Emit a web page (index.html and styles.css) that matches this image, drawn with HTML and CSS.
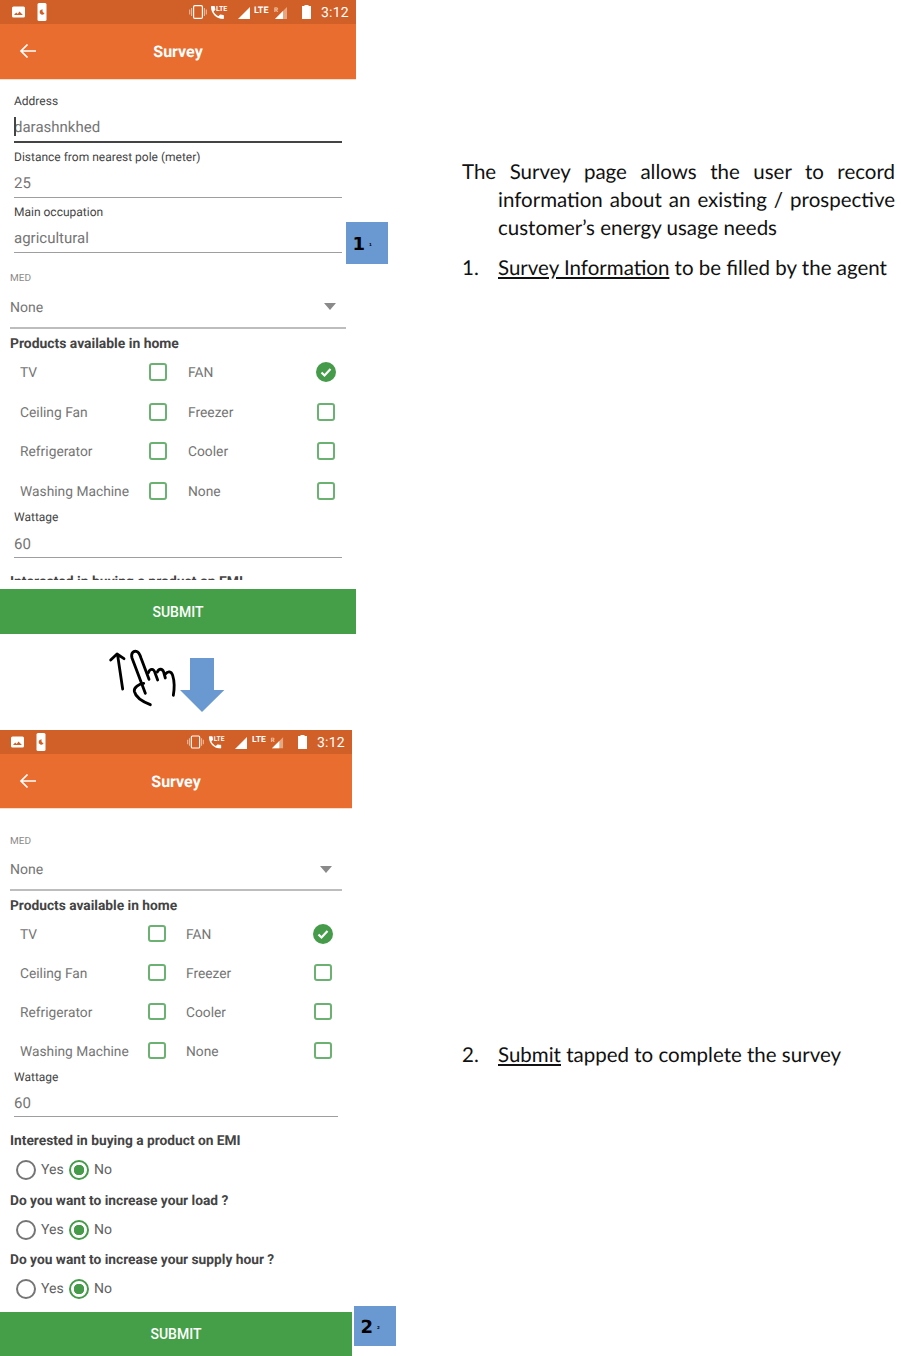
FILE: index.html
```html
<!DOCTYPE html>
<html lang="en">
<head>
  <meta charset="UTF-8" />
  <meta name="viewport" content="width=device-width, initial-scale=1.0" />
  <title>Survey page guide</title>
  <link rel="stylesheet" href="styles.css">
</head>
<body>
  <svg class="icon-defs" width="0" height="0">
    <symbol id="ic-image" viewBox="0 0 13 12">
      <rect x="0" y="0.500" width="13" height="11" rx="1.500" fill="#fff"/>
      <path d="M2 9l2.200-2.600 1.500 1.500 1.800-2.400 3.400 3.500z" fill="#d06027"/>
    </symbol>
    <symbol id="ic-phone" viewBox="0 0 10 18">
      <rect x="0.500" y="0" width="9" height="18" rx="1.500" fill="#fff"/>
      <path d="M5.800 6.500a2.600 2.600 0 1 0 1.800 3.600 2.400 2.400 0 0 1-1.800-3.600z" fill="#d06027"/>
    </symbol>
    <symbol id="ic-vibrate" viewBox="0 0 18 14">
      <rect x="4.600" y="0.600" width="8.800" height="12.800" rx="1.200" fill="none" stroke="#fff" stroke-width="1.200"/>
      <path d="M2.600 3v8M.7 4.500v5M15.400 3v8M17.300 4.500v5" stroke="#f0b999" stroke-width="1.100" fill="none"/>
    </symbol>
    <symbol id="ic-call" viewBox="0 0 19 14">
      <path transform="translate(-1.200 -1.200) scale(.72)" d="M6.620 10.790c1.440 2.830 3.760 5.140 6.590 6.590l2.200-2.200c.27-.27.670-.36 1.020-.24 1.120.37 2.330.57 3.570.57.550 0 1 .45 1 1V20c0 .55-.45 1-1 1-9.390 0-17-7.610-17-17 0-.55.45-1 1-1h3.500c.55 0 1 .45 1 1 0 1.250.2 2.450.57 3.570.11.350.03.740-.25 1.020l-2.200 2.200z" fill="#fff"/>
    </symbol>
    <symbol id="ic-signal" viewBox="0 0 12 12">
      <path d="M0 12L12 0v12z" fill="#fff"/>
    </symbol>
    <symbol id="ic-signal-faded" viewBox="0 0 34 14">
      <path d="M21 14L33 2v12z" fill="#e6a680"/>
      <path d="M21 14l8-8v8z" fill="#fff"/>
    </symbol>
    <symbol id="ic-battery" viewBox="0 0 9 14">
      <path d="M2.500 1V0h4v1H9v13H0V1z" fill="#fff"/>
    </symbol>
    <symbol id="ic-back" viewBox="0 0 18 16">
      <path d="M17 8H2M8.500 1.500L2 8l6.500 6.500" fill="none" stroke="#fff" stroke-width="1.700"/>
    </symbol>
    <symbol id="ic-checked" viewBox="0 0 20 20">
      <circle cx="10" cy="10" r="10" fill="#459b4a"/>
      <path d="M5.500 10.500l3 3 6-6.500" fill="none" stroke="#fff" stroke-width="2.200"/>
    </symbol>
  </svg>

  <div class="page">
    <div class="screens">

      <!-- top screen, form scrolled to the start -->
      <section class="phone phone-a">
        <div class="status-bar">
          <svg class="st-image"><use href="#ic-image"/></svg>
          <svg class="st-phone"><use href="#ic-phone"/></svg>
          <div class="status-right">
            <svg class="st-vibrate"><use href="#ic-vibrate"/></svg>
            <svg class="st-call" viewBox="0 0 19 14">
              <use href="#ic-call"/>
              <text x="6" y="6" class="svg-lte-small">LTE</text>
            </svg>
            <svg class="st-signal"><use href="#ic-signal"/></svg>
            <svg class="st-signal-r" viewBox="0 0 34 14">
              <text x="0" y="7.500" class="svg-lte">LTE</text>
              <text x="20" y="7" class="svg-r">R</text>
              <use href="#ic-signal-faded"/>
            </svg>
            <svg class="st-battery"><use href="#ic-battery"/></svg>
            <span class="st-time">3:12</span>
          </div>
        </div>
        <header class="app-bar">
          <svg class="back-icon"><use href="#ic-back"/></svg>
          <h1>Survey</h1>
        </header>
        <div class="form">
          <div class="field field-active">
            <label>Address</label>
            <div class="field-value"><i class="caret"></i>darashnkhed</div>
          </div>
          <div class="field">
            <label>Distance from nearest pole (meter)</label>
            <div class="field-value">25</div>
          </div>
          <div class="field">
            <label>Main occupation</label>
            <div class="field-value">agricultural</div>
          </div>
          <div class="select">
            <label>MED</label>
            <div class="select-row"><span>None</span><i class="select-arrow"></i></div>
          </div>
          <h2 class="form-heading">Products available in home</h2>
          <div class="products">
            <div class="product"><span>TV</span><i class="check"></i></div>
            <div class="product"><span>FAN</span><svg class="check-on"><use href="#ic-checked"/></svg></div>
            <div class="product"><span>Ceiling Fan</span><i class="check"></i></div>
            <div class="product"><span>Freezer</span><i class="check"></i></div>
            <div class="product"><span>Refrigerator</span><i class="check"></i></div>
            <div class="product"><span>Cooler</span><i class="check"></i></div>
            <div class="product"><span>Washing Machine</span><i class="check"></i></div>
            <div class="product"><span>None</span><i class="check"></i></div>
          </div>
          <div class="field field-wattage">
            <label>Wattage</label>
            <div class="field-value">60</div>
          </div>
          <h2 class="form-heading question">Interested in buying a product on EMI</h2>
        </div>
        <button class="submit">SUBMIT</button>
        <div class="step-badge"><b>1</b><small>1</small></div>
      </section>

      <div class="gesture">
        <svg width="180" height="96" viewBox="0 12 540 288">
          <g fill="none" stroke="#000" stroke-width="8.500" stroke-linecap="round" stroke-linejoin="round">
            <path d="M128 177L113 76M92 90l19-18 21 14"/>
            <path d="M211 224c-20-8-44-22-48-40-2-12 14-22 28-24"/>
            <path d="M196 190L156 84c-4-14 4-22 13-20 8 2 11 10 14 20l24 64"/>
            <path d="M205 128c6-14 16-12 20 0l8 22"/>
            <path d="M232 126c5-12 15-10 19 0l5 18"/>
            <path d="M256 132c8-10 18-8 22 4 5 16 6 36 2 60"/>
          </g>
          <path d="M330 84h72v96h31l-67 66-66-66h30z" fill="#6a98d0"/>
        </svg>
      </div>

      <!-- bottom screen, same form scrolled to the end -->
      <section class="phone phone-b">
        <div class="status-bar">
          <svg class="st-image"><use href="#ic-image"/></svg>
          <svg class="st-phone"><use href="#ic-phone"/></svg>
          <div class="status-right">
            <svg class="st-vibrate"><use href="#ic-vibrate"/></svg>
            <svg class="st-call" viewBox="0 0 19 14">
              <use href="#ic-call"/>
              <text x="6" y="6" class="svg-lte-small">LTE</text>
            </svg>
            <svg class="st-signal"><use href="#ic-signal"/></svg>
            <svg class="st-signal-r" viewBox="0 0 34 14">
              <text x="0" y="7.500" class="svg-lte">LTE</text>
              <text x="20" y="7" class="svg-r">R</text>
              <use href="#ic-signal-faded"/>
            </svg>
            <svg class="st-battery"><use href="#ic-battery"/></svg>
            <span class="st-time">3:12</span>
          </div>
        </div>
        <header class="app-bar">
          <svg class="back-icon"><use href="#ic-back"/></svg>
          <h1>Survey</h1>
        </header>
        <div class="form">
          <div class="select">
            <label>MED</label>
            <div class="select-row"><span>None</span><i class="select-arrow"></i></div>
          </div>
          <h2 class="form-heading">Products available in home</h2>
          <div class="products">
            <div class="product"><span>TV</span><i class="check"></i></div>
            <div class="product"><span>FAN</span><svg class="check-on"><use href="#ic-checked"/></svg></div>
            <div class="product"><span>Ceiling Fan</span><i class="check"></i></div>
            <div class="product"><span>Freezer</span><i class="check"></i></div>
            <div class="product"><span>Refrigerator</span><i class="check"></i></div>
            <div class="product"><span>Cooler</span><i class="check"></i></div>
            <div class="product"><span>Washing Machine</span><i class="check"></i></div>
            <div class="product"><span>None</span><i class="check"></i></div>
          </div>
          <div class="field field-wattage">
            <label>Wattage</label>
            <div class="field-value">60</div>
          </div>
          <div class="question-block">
            <h2 class="form-heading">Interested in buying a product on EMI</h2>
            <div class="radios"><i class="radio"></i><span>Yes</span><i class="radio radio-on"></i><span>No</span></div>
          </div>
          <div class="question-block">
            <h2 class="form-heading">Do you want to increase your load ?</h2>
            <div class="radios"><i class="radio"></i><span>Yes</span><i class="radio radio-on"></i><span>No</span></div>
          </div>
          <div class="question-block">
            <h2 class="form-heading">Do you want to increase your supply hour ?</h2>
            <div class="radios"><i class="radio"></i><span>Yes</span><i class="radio radio-on"></i><span>No</span></div>
          </div>
        </div>
        <button class="submit">SUBMIT</button>
        <div class="step-badge"><b>2</b><small>2</small></div>
      </section>
    </div>

    <div class="notes">
      <p class="intro"><span>The Survey page allows the user to record</span><span>information about an existing / prospective</span><span>customer’s energy usage needs</span></p>
      <p class="step step-one"><span class="step-num">1.</span><span><u>Survey Information</u> to be filled by the agent</span></p>
      <p class="step step-two"><span class="step-num">2.</span><span><u>Submit</u> tapped to complete the survey</span></p>
    </div>
  </div>
</body>
</html>
```

FILE: styles.css
```css
html, body {
  margin: 0;
  padding: 0;
  background: #fff;
}
body {
  font-family: Roboto, "Liberation Sans", sans-serif;
  text-rendering: geometricPrecision;
}
.icon-defs {
  display: block;
  height: 0;
}
.svg-lte {
  font: 700 9px Roboto, sans-serif;
  fill: #fff;
}
.svg-lte-small {
  font: 700 7px Roboto, sans-serif;
  fill: #fff;
}
.svg-r {
  font: 700 6.500px Roboto, sans-serif;
  fill: #f3c9ae;
}
.page {
  display: flex;
  width: 904px;
  height: 1356px;
  overflow: hidden;
}
.screens {
  width: 462px;
  flex: none;
}

/* phone */
.phone {
  position: relative;
  display: flex;
  flex-direction: column;
  width: 356px;
}
.phone-a {
  height: 634px;
}
.phone-b {
  width: 352px;
  height: 626px;
}
.status-bar {
  display: flex;
  align-items: center;
  height: 24px;
  padding: 0 8px 0 12px;
  background: #d06027;
  flex: none;
}
.phone-b .status-bar {
  padding-left: 11px;
}
.status-bar svg {
  display: block;
  flex: none;
}
.st-image {
  width: 13px;
  height: 12px;
}
.st-phone {
  width: 10px;
  height: 18px;
  margin-left: 12px;
}
.status-right {
  display: flex;
  align-items: center;
  margin-left: auto;
}
.st-vibrate {
  width: 18px;
  height: 14px;
}
.st-call {
  width: 19px;
  height: 14px;
  margin-left: 3px;
}
.st-signal {
  width: 12px;
  height: 12px;
  margin-left: 9px;
  position: relative;
  top: 1px;
}
.st-signal-r {
  width: 34px;
  height: 14px;
  margin-left: 4px;
}
.st-battery {
  width: 9px;
  height: 14px;
  margin-left: 14px;
}
.st-time {
  width: 27px;
  margin-left: 10px;
  padding-top: 2px;
  color: #fff;
  font-size: 14px;
  letter-spacing: 0.2px;
}
.phone-b .st-vibrate {
  width: 17px;
}
.phone-b .st-call {
  width: 18px;
  margin-left: 4px;
}
.phone-b .st-signal-r {
  width: 32px;
  margin-left: 5px;
}
.app-bar {
  position: relative;
  display: flex;
  align-items: center;
  justify-content: center;
  height: 55px;
  background: #e96d2f;
  border-bottom: 1px solid #fbdccb;
  flex: none;
}
.phone-b .app-bar {
  height: 54px;
}
.app-bar h1 {
  margin: 0;
  color: #fff;
  font-size: 16px;
  font-weight: 700;
}
.back-icon {
  position: absolute;
  left: 19px;
  top: 19px;
  width: 18px;
  height: 16px;
}
.form {
  height: 500px;
  padding-top: 13px;
  box-sizing: border-box;
  overflow: hidden;
  flex: none;
}
.phone-b .form {
  height: 503px;
  padding-top: 23px;
}
.field {
  height: 55.500px;
  margin: 0 14px;
  box-sizing: border-box;
}
.field label {
  display: block;
  height: 16px;
  color: #444;
  font-size: 12px;
  line-height: 16px;
}
.field-value {
  position: relative;
  height: 33px;
  padding-top: 4px;
  box-sizing: border-box;
  color: #757575;
  font-size: 15px;
  line-height: 28px;
  border-bottom: 1px solid #9e9e9e;
}
.field-active .field-value {
  height: 34px;
  border-bottom: 2px solid #444;
}
.caret {
  position: absolute;
  left: 0;
  top: 8px;
  width: 2px;
  height: 19px;
  background: #444;
}
.field-wattage {
  height: 49px;
  margin-top: -2px;
}
.field-wattage .field-value {
  height: 33px;
  padding-top: 5px;
}
.phone-b .field-wattage {
  margin-top: -1px;
}
.phone-b .field-wattage .field-value {
  height: 32px;
  padding-top: 4px;
}
.select {
  margin: 10px 10px 0;
  height: 59px;
  box-sizing: border-box;
  border-bottom: 2px solid #bdbdbd;
}
.phone-b .select {
  margin-top: 1px;
  height: 58px;
}
.select label {
  display: block;
  height: 16px;
  color: #8a8a8a;
  font-size: 10px;
  line-height: 18px;
}
.select-row {
  display: flex;
  align-items: center;
  justify-content: space-between;
  height: 40px;
  padding: 2px 10px 0 0;
  box-sizing: border-box;
  color: #757575;
  font-size: 14px;
}
.select-row span {
  padding-top: 2px;
}
.phone-b .select-row {
  padding-top: 0;
}
.select-arrow {
  width: 0;
  height: 0;
  border-left: 6.500px solid transparent;
  border-right: 6.500px solid transparent;
  border-top: 7px solid #8a8a8a;
}
.form-heading {
  margin: 7px 10px 0;
  color: #444;
  font-size: 13.900px;
  font-weight: 700;
  line-height: 16px;
}
.phone-b .form-heading {
  font-size: 13.750px;
}
.question {
  margin-top: 16px;
}
.products {
  display: grid;
  grid-template-columns: 147px 147px;
  grid-auto-rows: 39.500px;
  column-gap: 21px;
  padding: 1px 0 0 20px;
  color: #757575;
  font-size: 13.800px;
}
.phone-b .products {
  grid-template-columns: 145.500px 145.500px;
  grid-auto-rows: 39px;
  column-gap: 20.500px;
  padding-top: 0;
  font-size: 13.750px;
}
.product {
  display: flex;
  align-items: center;
  justify-content: space-between;
}
.product span {
  padding-top: 2px;
}
.check {
  display: block;
  width: 18px;
  height: 18px;
  box-sizing: border-box;
  border: 2px solid #6bb272;
  border-radius: 3px;
}
.phone-b .check {
  width: 17.500px;
  height: 17.500px;
}
.check-on {
  display: block;
  width: 20px;
  height: 20px;
  margin-right: -1px;
}
.question-block {
  height: 59.700px;
}
.question-block .form-heading {
  margin-top: 0;
}
.field-wattage + .question-block {
  margin-top: 15px;
}
.radios {
  display: flex;
  align-items: center;
  height: 20px;
  margin-top: 11px;
  padding-left: 16px;
  color: #616161;
  font-size: 14px;
}
.radios span {
  margin-left: 5px;
}
.radios span:nth-child(2) {
  width: 28px;
}
.radio {
  display: block;
  flex: none;
  width: 20px;
  height: 20px;
  box-sizing: border-box;
  border: 2px solid #757575;
  border-radius: 50%;
}
.radio-on {
  border-color: #459b4a;
  background: radial-gradient(circle, #459b4a 0 5px, transparent 5.500px);
}
.submit {
  display: block;
  width: 100%;
  height: 45px;
  margin-top: 9px;
  padding: 0;
  border: none;
  background: #459f48;
  color: #fff;
  font-family: inherit;
  font-size: 14px;
  font-weight: 500;
  flex: none;
}
.phone-b .submit {
  height: 44px;
  margin-top: 0;
}

/* number tags next to the screens */
.step-badge {
  position: absolute;
  left: 346px;
  top: 222px;
  display: flex;
  align-items: center;
  width: 42px;
  height: 42px;
  padding: 3px 0 0 6.500px;
  box-sizing: border-box;
  background: #6a98d0;
  color: #000;
  font-family: "DejaVu Sans", sans-serif;
}
.step-badge b {
  font-size: 18px;
  line-height: 1;
}
.step-badge small {
  margin-left: 4px;
  font-size: 4px;
  font-weight: 700;
}
.phone-b .step-badge {
  left: 354px;
  top: 576px;
  height: 40px;
}
.gesture {
  height: 96px;
  padding-left: 80px;
}
.gesture svg {
  display: block;
}

/* text column */
.notes {
  width: 433px;
  color: #111;
  font-family: Lato, "Open Sans", sans-serif;
  font-size: 20.500px;
  line-height: 28px;
}
.notes p {
  margin: 0;
}
.intro {
  padding: 158px 0 0 36px;
}
.intro span {
  display: block;
  text-align: justify;
  text-align-last: justify;
}
.intro span:first-child {
  margin-left: -36px;
}
.intro span:last-child {
  text-align-last: left;
}
.step {
  display: flex;
}
.step-num {
  width: 36px;
  flex: none;
}
.step-one {
  margin-top: 12px !important;
}
.step-two {
  margin-top: 759px !important;
}
```
